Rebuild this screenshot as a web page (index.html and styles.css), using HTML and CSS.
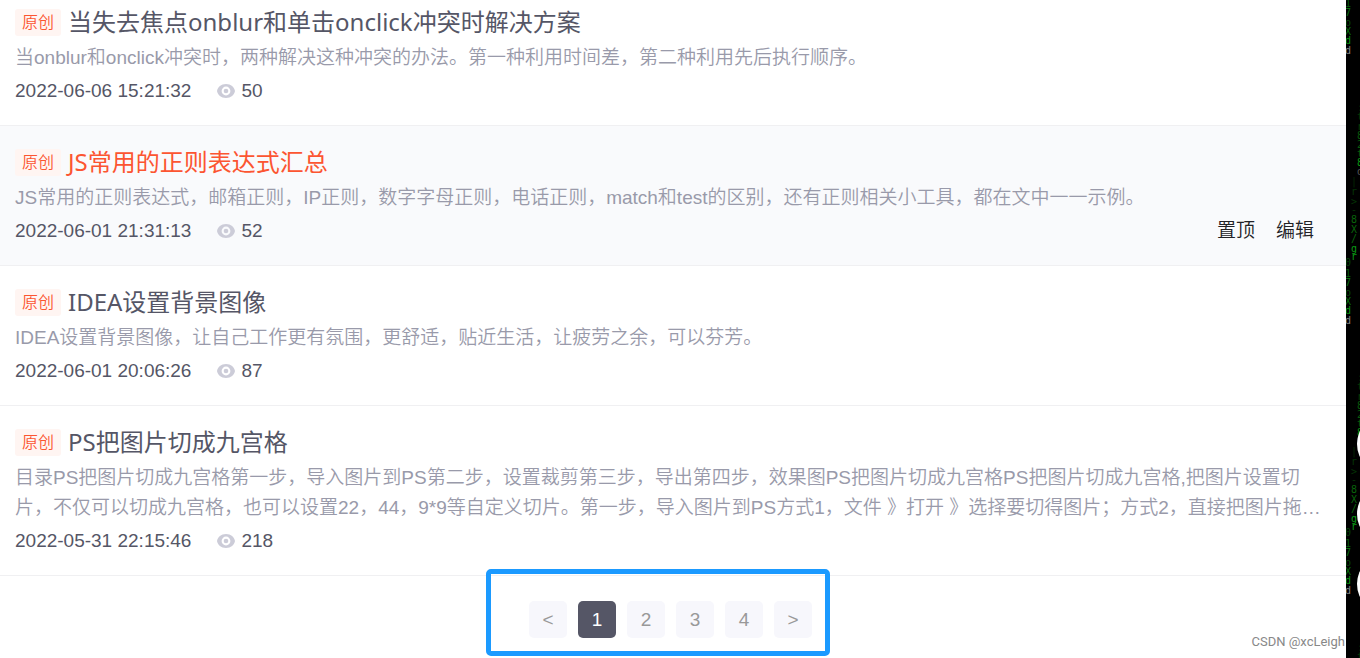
FILE: index.html
```
<!DOCTYPE html>
<html lang="zh-CN">
<head>
<meta charset="utf-8">
<title>文章列表</title>
<link rel="stylesheet" href="styles.css">
</head>
<body>
<svg class="defs" aria-hidden="true">
  <symbol id="eye" viewBox="0 0 18 14">
    <path fill="#ccccd8" fill-rule="evenodd" d="M9 0C14 0 17.200 3.200 18 7C17.200 10.800 14 14 9 14S.8 10.800 0 7C.8 3.200 4 0 9 0ZM9 2.600A4.400 4.400 0 1 0 9 11.400A4.400 4.400 0 1 0 9 2.600Z"/>
    <circle cx="9" cy="7" r="2.300" fill="#ccccd8"/>
  </symbol>
</svg>
<div class="page">
  <main class="panel">
    <article class="item item-first">
      <h2 class="title"><span class="tag">原创</span><a href="#">当失去焦点onblur和单击onclick冲突时解决方案</a></h2>
      <p class="desc">当onblur和onclick冲突时，两种解决这种冲突的办法。第一种利用时间差，第二种利用先后执行顺序。</p>
      <div class="meta"><time>2022-06-06 15:21:32</time><span class="views"><svg class="eye"><use href="#eye"/></svg>50</span></div>
    </article>
    <article class="item item-active">
      <h2 class="title"><span class="tag">原创</span><a href="#">JS常用的正则表达式汇总</a></h2>
      <p class="desc">JS常用的正则表达式，邮箱正则，IP正则，数字字母正则，电话正则，match和test的区别，还有正则相关小工具，都在文中一一示例。</p>
      <div class="meta"><time>2022-06-01 21:31:13</time><span class="views"><svg class="eye"><use href="#eye"/></svg>52</span>
        <div class="actions"><button type="button">置顶</button><button type="button">编辑</button></div>
      </div>
    </article>
    <article class="item">
      <h2 class="title"><span class="tag">原创</span><a href="#">IDEA设置背景图像</a></h2>
      <p class="desc">IDEA设置背景图像，让自己工作更有氛围，更舒适，贴近生活，让疲劳之余，可以芬芳。</p>
      <div class="meta"><time>2022-06-01 20:06:26</time><span class="views"><svg class="eye"><use href="#eye"/></svg>87</span></div>
    </article>
    <article class="item">
      <h2 class="title"><span class="tag">原创</span><a href="#">PS把图片切成九宫格</a></h2>
      <p class="desc">目录PS把图片切成九宫格第一步，导入图片到PS第二步，设置裁剪第三步，导出第四步，效果图PS把图片切成九宫格PS把图片切成九宫格,把图片设置切<br>片，不仅可以切成九宫格，也可以设置22，44，9*9等自定义切片。第一步，导入图片到PS方式1，文件 》打开 》选择要切得图片；方式2，直接把图片拖…</p>
      <div class="meta"><time>2022-05-31 22:15:46</time><span class="views"><svg class="eye"><use href="#eye"/></svg>218</span></div>
    </article>
    <div class="footer">
      <nav class="pager" aria-label="分页">
        <button type="button">&lt;</button>
        <button type="button" class="current" aria-current="page">1</button>
        <button type="button">2</button>
        <button type="button">3</button>
        <button type="button">4</button>
        <button type="button">&gt;</button>
      </nav>
    </div>
    <span class="watermark">CSDN @xcLeigh</span>
  </main>
  <aside class="rain" aria-hidden="true">
    <svg class="rain-art">
      <defs>
        <g id="drops" font-family="DejaVu Sans Mono" font-size="10" text-anchor="middle">
          <g fill="#08700d">
            <text x="2" y="266" opacity=".6">0</text><text x="2" y="277" opacity=".8">1</text><text x="2" y="286">7</text><text x="2" y="296" opacity=".7">o</text><text x="2" y="305">X</text><text x="2" y="314" fill="#0a9a14">d</text>
          </g>
          <text x="2" y="324" fill="#888">d</text>
          <g fill="#08640b">
            <text x="8" y="185" opacity=".4">|</text><text x="8" y="195" opacity=".5">r</text><text x="8" y="205" opacity=".5">&gt;</text><text x="8" y="213" opacity=".5">-</text><text x="8" y="223">8</text><text x="8" y="233">X</text><text x="8" y="242">/</text><text x="8" y="252" fill="#0a9a14">g</text><text x="8" y="260" fill="#0a9a14">r</text>
          </g>
          <g fill="#085a0c">
            <text x="14" y="111" opacity=".4">:</text><text x="14" y="120" opacity=".6">t</text><text x="14" y="130" opacity=".7">r</text><text x="14" y="139">8</text><text x="14" y="148">2</text><text x="14" y="157">t</text><text x="14" y="166" fill="#0a9a14">8</text>
          </g>
          <text x="14" y="175" fill="#555">d</text>
        </g>
      </defs>
      <use href="#drops" y="-270"/>
      <use href="#drops"/>
      <use href="#drops" y="270"/>
      <use href="#drops" y="540"/>
      <g fill="#fff"><circle cx="41" cy="444" r="30"/><circle cx="41" cy="514" r="30"/><circle cx="41" cy="584" r="30"/></g>
    </svg>
  </aside>
</div>
</body>
</html>
```
FILE: styles.css
```
* { box-sizing: border-box; }
body {
  margin: 0;
  background: #000;
  color: #555666;
  font: 19px/30px "Liberation Sans", "Noto Sans CJK SC", sans-serif;
}
.defs { position: absolute; width: 0; height: 0; }
.page {
  display: grid;
  grid-template-columns: minmax(0, 1fr) 14px;
  min-height: 100vh;
}
.panel { position: relative; background: #fff; }
.item {
  display: flex;
  flex-direction: column;
  gap: 3px;
  padding: 18px 20px 19px 15px;
  border-bottom: 1px solid #f0f0f2;
}
.item-first { padding-top: 4px; }
.item-active { background: #f9fafc; }
.title {
  display: flex;
  align-items: center;
  gap: 7px;
  margin: 0;
  font: 400 24px/36px "Noto Sans", "Noto Sans CJK SC", sans-serif;
}
.title a { color: inherit; text-decoration: none; }
.item-active .title a { color: #fc5531; }
.tag {
  padding: 0 7px;
  border-radius: 3px;
  background: #fff5f2;
  color: #fc5531;
  font-size: 16px;
  font-weight: 350;
  line-height: 27px;
}
.desc { margin: 0; color: #999aaa; font-weight: 350; }
.meta { display: flex; align-items: center; }
.views { display: flex; align-items: center; gap: 6px; margin-left: 26px; }
.eye { width: 18px; height: 14px; }
.actions { display: flex; gap: 21px; margin: 0 12px 0 auto; }
button { padding: 0; border: 0; font: inherit; cursor: pointer; }
.actions button { background: none; color: #222226; font-weight: 350; }
.footer {
  display: flex;
  justify-content: center;
  padding: 25px 5px 20px 0;
}
.pager { position: relative; display: flex; gap: 11px; }
.pager::after {
  content: "";
  position: absolute;
  inset: -32px -18px -18px -43px;
  border: 5px solid #1b9aff;
  border-radius: 5px;
  pointer-events: none;
}
.pager button {
  width: 38px;
  height: 37px;
  border-radius: 5px;
  background: #f7f7fc;
  color: #999;
}
.pager .current { background: #555666; color: #fff; }
.watermark {
  position: absolute;
  right: 1px;
  bottom: 6px;
  color: #888;
  font: 13px/20px Roboto, sans-serif;
}
.rain { position: relative; overflow: hidden; background: #000; }
.rain-art { position: absolute; inset: 0; width: 100%; height: 100%; }
```
